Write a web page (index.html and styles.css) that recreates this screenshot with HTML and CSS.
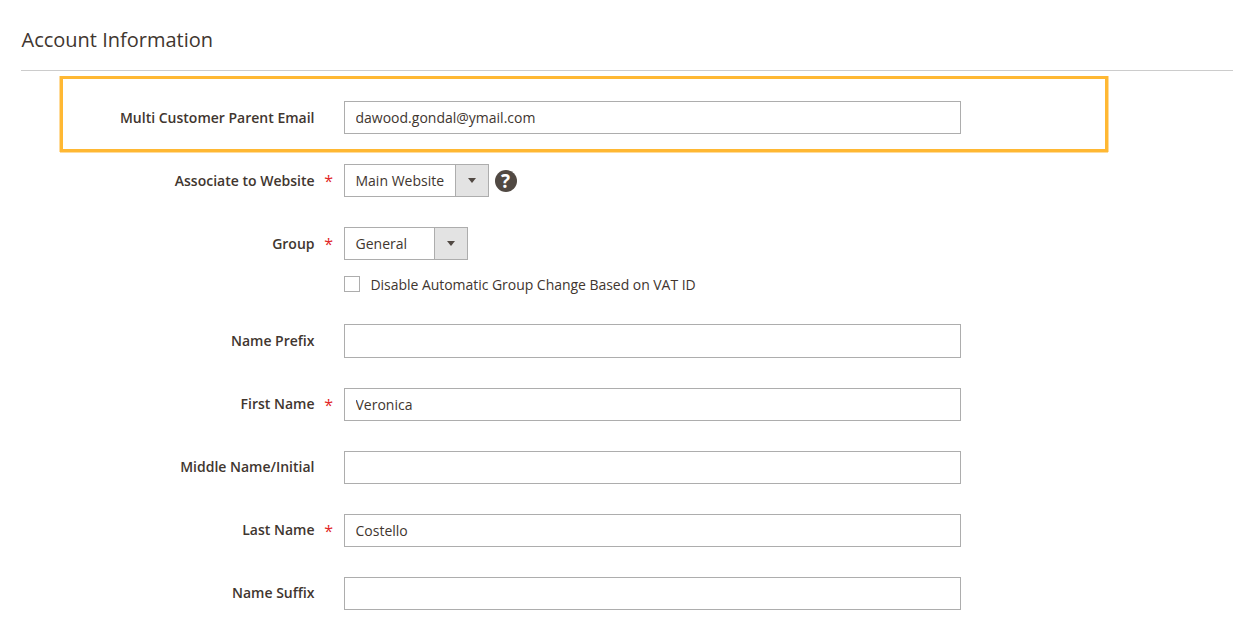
FILE: index.html
```html
<!DOCTYPE html>
<html lang="en">
<head>
    <meta charset="UTF-8">
    <title>Account Information</title>
    <link rel="stylesheet" href="styles.css">
</head>
<body>
    <div class="section-title">
        <h1>Account Information</h1>
    </div>

    <form class="account-form">
        <div class="highlight">
            <div class="field">
                <label class="field-label" for="parent">Multi Customer Parent Email</label>
                <span class="field-star"></span>
                <input class="text-input" type="text" id="parent" value="dawood.gondal@ymail.com">
            </div>
        </div>

        <div class="field field-website">
            <label class="field-label">Associate to Website</label>
            <span class="field-star">*</span>
            <div class="control-line">
                <div class="select-box select-website">
                    <span class="select-value">Main Website</span>
                    <span class="select-arrow"></span>
                </div>
                <span class="help-icon">?</span>
            </div>
        </div>

        <div class="field field-group">
            <label class="field-label">Group</label>
            <span class="field-star">*</span>
            <div class="select-box select-group">
                <span class="select-value">General</span>
                <span class="select-arrow"></span>
            </div>
        </div>

        <div class="field field-check">
            <span class="field-label"></span>
            <span class="field-star"></span>
            <label class="check-line"><span class="check-box"></span><span class="check-text">Disable Automatic Group Change Based on VAT ID</span></label>
        </div>

        <div class="field field-prefix">
            <label class="field-label" for="prefix">Name Prefix</label>
            <span class="field-star"></span>
            <input class="text-input input-tall" type="text" id="prefix">
        </div>

        <div class="field field-name">
            <label class="field-label" for="first">First Name</label>
            <span class="field-star">*</span>
            <input class="text-input" type="text" id="first" value="Veronica">
        </div>

        <div class="field field-name">
            <label class="field-label" for="middle">Middle Name/Initial</label>
            <span class="field-star"></span>
            <input class="text-input" type="text" id="middle">
        </div>

        <div class="field field-name">
            <label class="field-label" for="last">Last Name</label>
            <span class="field-star">*</span>
            <input class="text-input" type="text" id="last" value="Costello">
        </div>

        <div class="field field-name">
            <label class="field-label" for="suffix">Name Suffix</label>
            <span class="field-star"></span>
            <input class="text-input" type="text" id="suffix">
        </div>
    </form>
</body>
</html>
```

FILE: styles.css
```css
html, body {
    margin: 0;
    padding: 0;
    background: #ffffff;
    overflow: hidden;
}
body {
    font-family: 'Open Sans', sans-serif;
    font-size: 14px;
    color: #41362f;
}
.section-title {
    margin-left: 21px;
    height: 70px;
    border-bottom: 1px solid #cccccc;
    box-sizing: content-box;
}
h1 {
    margin: 0;
    padding: 26px 0 0 0.5px;
    font-size: 20px;
    line-height: 27px;
    font-weight: 400;
}
.account-form {
    padding-top: 5px;
}
.highlight {
    width: 1048px;
    height: 76px;
    margin-left: 60px;
    margin-bottom: 12px;
    border: 3px solid #ffb833;
    box-shadow: -1px 0 0 #ffdc9c, 1px 0 0 #ffdc9c, 0 1px 0 #ffdc9c;
    box-sizing: border-box;
    padding-top: 22px;
}
.field {
    display: grid;
    grid-template-columns: 314.5px 29.5px 617px;
    align-items: center;
    height: 33px;
}
.highlight .field {
    grid-template-columns: 251.5px 29.5px 617px;
}
.field-label {
    font-weight: 600;
    text-align: right;
    white-space: nowrap;
}
.field-star {
    color: #e22626;
    font-size: 16px;
    text-align: center;
    padding-right: 1px;
}
.text-input {
    width: 617px;
    height: 33px;
    box-sizing: border-box;
    border: 1px solid #adadad;
    border-radius: 0;
    padding: 0 10.5px;
    font-family: 'Open Sans', sans-serif;
    font-size: 14px;
    color: #41362f;
    background: #ffffff;
    outline: none;
}
.input-tall {
    height: 34px;
}
.control-line {
    display: flex;
    align-items: center;
}
.select-box {
    display: flex;
    height: 33px;
    box-sizing: border-box;
    border: 1px solid #adadad;
}
.select-website {
    width: 145px;
}
.select-group {
    width: 124px;
}
.select-value {
    flex: 1;
    padding-left: 10.5px;
    line-height: 31px;
    white-space: nowrap;
}
.select-arrow {
    display: flex;
    align-items: center;
    justify-content: center;
    width: 32px;
    border-left: 1px solid #adadad;
    background: #e3e3e3;
}
.select-arrow::after {
    content: "";
    border-top: 5px solid #514943;
    border-left: 4px solid transparent;
    border-right: 4px solid transparent;
}
.help-icon {
    display: block;
    width: 22px;
    height: 22px;
    margin: 1px 0 0 5.5px;
    border-radius: 50%;
    background: #514943;
    color: #ffffff;
    font-size: 19px;
    font-weight: 700;
    line-height: 22px;
    text-align: center;
}
.field-website {
    margin-bottom: 30px;
}
.field-group {
    margin-bottom: 16px;
}
.field-check {
    grid-template-rows: 16px;
    height: 16px;
    margin-bottom: 32px;
}
.field-check .field-star {
    line-height: 16px;
}
.check-line {
    display: flex;
    align-items: center;
    height: 16px;
    white-space: nowrap;
}
.check-box {
    width: 16px;
    height: 16px;
    box-sizing: border-box;
    border: 1px solid #adadad;
    margin-right: 10.5px;
}
.check-text {
    letter-spacing: -0.04px;
}
.field-prefix {
    height: 34px;
    margin-bottom: 30px;
}
.field-name {
    margin-bottom: 30px;
}
.field-prefix .field-label,
.field-name .field-label {
    padding-bottom: 2px;
}
```
